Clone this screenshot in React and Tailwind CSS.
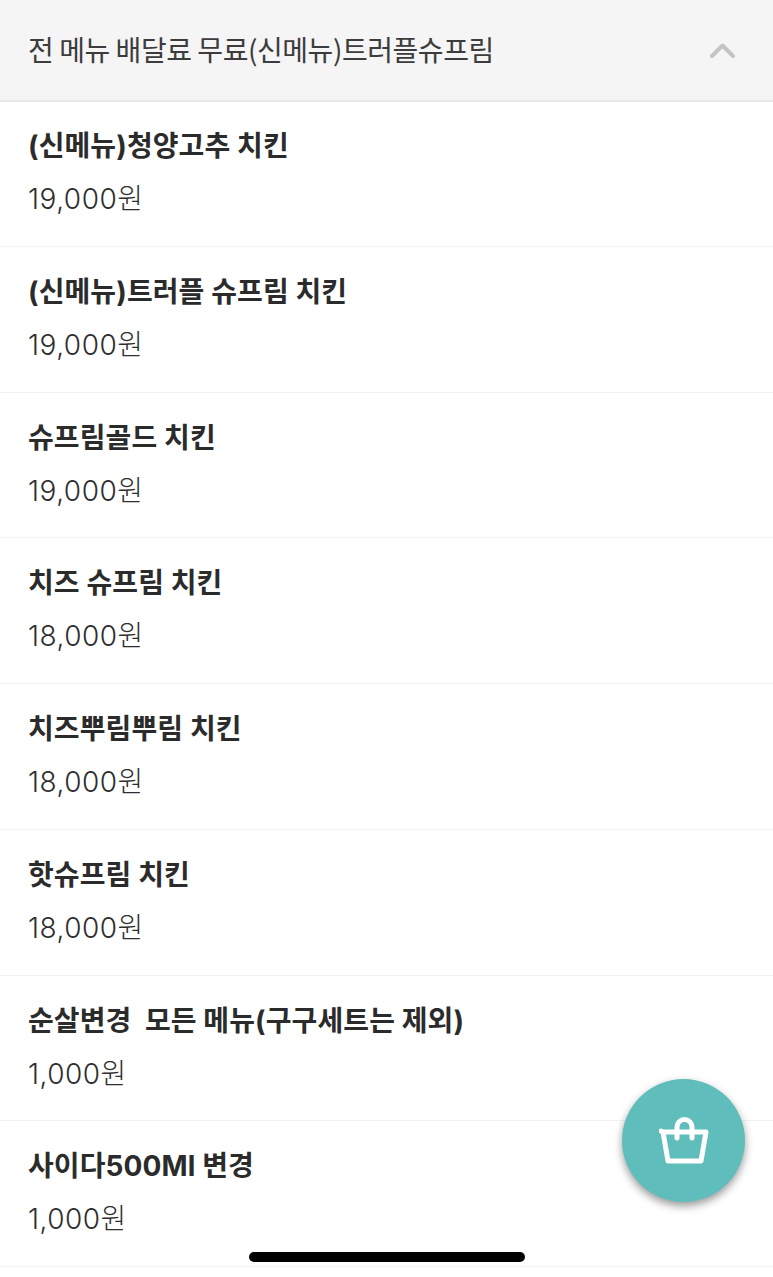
import React from 'react';

const menus = [
  { name: '(신메뉴)청양고추 치킨', price: '19,000원' },
  { name: '(신메뉴)트러플 슈프림 치킨', price: '19,000원' },
  { name: '슈프림골드 치킨', price: '19,000원' },
  { name: '치즈 슈프림 치킨', price: '18,000원' },
  { name: '치즈뿌림뿌림 치킨', price: '18,000원' },
  { name: '핫슈프림 치킨', price: '18,000원' },
  { name: '순살변경  모든 메뉴(구구세트는 제외)', price: '1,000원' },
  { name: '사이다500Ml 변경', price: '1,000원' },
];

const MenuRow = ({ menu }) => (
  <div className="h-[145.7px] border-b border-[#f2f2f2] pl-[28px] pt-[27px]">
    <h3 className="font-['Inter','Noto_Sans_CJK_KR',sans-serif] text-[28px] leading-[36px] font-bold tracking-[0.1px] text-[#2b2b2b] whitespace-pre">{menu.name}</h3>
    <p className="mt-[17px] font-['Inter','Noto_Sans_CJK_KR',sans-serif] text-[28px] leading-[36px] font-light tracking-[0.5px] text-[#2e2e2e]">{menu.price}</p>
  </div>
);

export default function App() {
  return (
    <div className="relative h-[1277px] w-[773px] overflow-hidden bg-white font-['Noto_Sans_CJK_KR','Noto_Sans',sans-serif]">
      {/* 헤더 */}
      <div className="-mb-[0.6px] flex h-[102px] items-start justify-between border-b-2 border-[#e8e8e8] bg-[#f5f5f5] pl-[28px] pr-[37px] pt-[30px]">
        <h2 className="text-[28px] leading-[38px] font-normal tracking-[-0.45px] text-[#3c3c3c]">전 메뉴 배달료 무료(신메뉴)트러플슈프림</h2>
        <svg className="mt-[11px]" width="27" height="18" viewBox="0 0 27 18" fill="none">
          <path d="M3 15 L13.5 4.5 L24 15" stroke="#c4c4c4" strokeWidth="4" strokeLinecap="round" strokeLinejoin="round" />
        </svg>
      </div>

      {menus.map(menu => (
        <MenuRow key={menu.name} menu={menu} />
      ))}

      {/* 장바구니 버튼 */}
      <button className="absolute left-[622px] top-[1079px] flex h-[123px] w-[123px] items-center justify-center rounded-full bg-[#5fbdbc] shadow-[0_4px_8px_rgba(0,0,0,0.4)]">
        <svg width="50" height="48" viewBox="0 0 50 48" fill="none" stroke="#fff" strokeWidth="5" strokeLinecap="round" strokeLinejoin="round">
          <path d="M2 14 L4 15 L47 15 L42 44 L9 44 L4 15" />
          <path d="M18 21 L18 10 A7.5 7.5 0 0 1 33 10 L33 21" />
        </svg>
      </button>

      {/* 홈 인디케이터 */}
      <div className="absolute bottom-[15px] left-[249px] h-[10px] w-[276px] rounded-full bg-black" />
    </div>
  );
}
